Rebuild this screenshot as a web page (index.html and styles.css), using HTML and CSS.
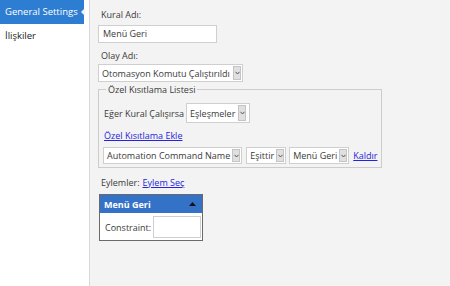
FILE: index.html
```html
<!DOCTYPE html>
<html lang="tr">
<head>
  <meta charset="UTF-8">
  <title>Kural Ayarları</title>
  <link rel="stylesheet" href="styles.css">
</head>
<body>
  <div class="page">
    <div class="sidebar">
      <div class="tab active">General Settings</div>
      <div class="tab">İlişkiler</div>
    </div>

    <div class="content">
      <div class="field-label">Kural Adı:</div>
      <div class="textbox name-box">Menü Geri</div>

      <div class="field-label short">Olay Adı:</div>
      <div class="select event-select">
        <span class="select-text">Otomasyon Komutu Çalıştırıldı</span>
        <span class="select-arrow"><svg width="5" height="4" viewBox="0 0 5 4"><path d="M0.5 0.8 L2.5 3 L4.5 0.8" fill="none" stroke="#555" stroke-width="1"/></svg></span>
      </div>

      <fieldset class="constraints">
        <legend>Özel Kısıtlama Listesi</legend>

        <div class="row match-row">
          <span>Eğer Kural Çalışırsa</span>
          <div class="select match-select">
            <span class="select-text">Eşleşmeler</span>
            <span class="select-arrow"><svg width="5" height="4" viewBox="0 0 5 4"><path d="M0.5 0.8 L2.5 3 L4.5 0.8" fill="none" stroke="#555" stroke-width="1"/></svg></span>
          </div>
        </div>

        <a class="link add-link" href="#">Özel Kısıtlama Ekle</a>

        <div class="row cond-row">
          <div class="select cond-field">
            <span class="select-text">Automation Command Name</span>
            <span class="select-arrow"><svg width="5" height="4" viewBox="0 0 5 4"><path d="M0.5 0.8 L2.5 3 L4.5 0.8" fill="none" stroke="#555" stroke-width="1"/></svg></span>
          </div>
          <div class="select cond-op">
            <span class="select-text">Eşittir</span>
            <span class="select-arrow"><svg width="5" height="4" viewBox="0 0 5 4"><path d="M0.5 0.8 L2.5 3 L4.5 0.8" fill="none" stroke="#555" stroke-width="1"/></svg></span>
          </div>
          <div class="select cond-value">
            <span class="select-text">Menü Geri</span>
            <span class="select-arrow"><svg width="5" height="4" viewBox="0 0 5 4"><path d="M0.5 0.8 L2.5 3 L4.5 0.8" fill="none" stroke="#555" stroke-width="1"/></svg></span>
          </div>
          <a class="link" href="#">Kaldır</a>
        </div>
      </fieldset>

      <div class="actions">
        <span>Eylemler:</span>
        <a class="link" href="#">Eylem Seç</a>
      </div>

      <div class="action-box">
        <div class="action-head">
          <span>Menü Geri</span>
          <svg width="7" height="4" viewBox="0 0 7 4"><path d="M0 4 L3.5 0 L7 4 Z" fill="#111"/></svg>
        </div>
        <div class="action-body">
          <span>Constraint:</span>
          <div class="textbox small-box"></div>
        </div>
      </div>
    </div>
  </div>
</body>
</html>
```

FILE: styles.css
```css
body {
  margin: 0;
  font-family: "Open Sans", "Liberation Sans", sans-serif;
  font-size: 9px;
  line-height: 13px;
  color: #3a3a3a;
}

.page {
  display: flex;
  height: 286px;
}

.sidebar {
  width: 89px;
  background: #fff;
  border-right: 1px solid #d8d8d8;
}

.tab {
  height: 24px;
  line-height: 24px;
  padding-left: 5px;
  font-size: 9.5px;
  color: #222;
  white-space: nowrap;
}

.tab.active {
  position: relative;
  width: 79px;
  background: #2d7dd2;
  color: #fff;
}

/* notch on the active tab */
.tab.active::after {
  content: "";
  position: absolute;
  right: -1px;
  top: 8px;
  border-style: solid;
  border-width: 4px 4px 4px 0;
  border-color: transparent #f3f3f3 transparent transparent;
}

.content {
  flex: 1;
  background: #f3f3f3;
  padding: 6px 8px 0 8px;
}

.field-label {
  margin-left: 3px;
  height: 17px;
  line-height: 17px;
}

.field-label.short {
  height: 16px;
  line-height: 15px;
}

.textbox {
  box-sizing: border-box;
  background: #fff;
  border: 1px solid #cfcfcf;
  height: 18px;
  line-height: 16px;
  padding-left: 4px;
}

.name-box {
  width: 119px;
  margin: 2px 0 5px;
}

.select {
  box-sizing: border-box;
  display: flex;
  flex: none;
  align-items: center;
  height: 17px;
  background: #fff;
  border: 1px solid #cfcfcf;
  padding: 0 1px 0 3px;
}

.select-text {
  flex: 1;
  white-space: nowrap;
  margin-right: 2px;
}

.select-arrow {
  display: flex;
  flex: none;
  align-items: center;
  justify-content: center;
  width: 8px;
  height: 13px;
  background: #e0e0e0;
  border: 1px solid #c4c4c4;
  box-sizing: border-box;
}

.event-select {
  width: 145px;
  height: 18px;
}

.event-select .select-arrow {
  height: 14px;
}

.constraints {
  margin: 1px 0 0 0;
  width: 280px;
  box-sizing: border-box;
  border: 1px solid #cccccc;
  padding: 7px 4px 3px 4px;
}

.constraints legend {
  padding: 0 2px;
  margin-left: 3px;
}

.row {
  display: flex;
  align-items: center;
}

.match-row span {
  margin-left: 1px;
  margin-right: 2px;
}

.match-select {
  min-width: 58px;
  height: 20px;
  padding-left: 2px;
}

.match-select .select-arrow {
  height: 16px;
}

.link {
  color: #2424e0;
  text-decoration: underline;
}

.add-link {
  display: block;
  margin: 6px 0 0 1px;
  width: max-content;
}

.cond-row {
  margin-top: 5px;
}

.cond-field {
  min-width: 139px;
  margin-right: 4px;
}

.cond-op {
  min-width: 39px;
  margin-right: 3px;
}

.cond-value {
  min-width: 59px;
  margin-right: 4px;
}

.actions {
  margin: 8px 0 0 3px;
  display: flex;
  gap: 3px;
}

.action-box {
  width: 104px;
  box-sizing: border-box;
  margin: 5px 0 0 1px;
  border: 1px solid #6a6a6a;
  background: #fff;
}

.action-head {
  display: flex;
  justify-content: space-between;
  align-items: center;
  height: 18px;
  padding: 0 6px 0 4px;
  background: #3472c8;
  color: #fff;
  font-weight: bold;
}

.action-body {
  display: flex;
  align-items: center;
  padding: 3px 1px 2px 5px;
}

.action-body span {
  margin-right: 2px;
}

.small-box {
  width: 48px;
  height: 22px;
  margin-left: auto;
}
```
